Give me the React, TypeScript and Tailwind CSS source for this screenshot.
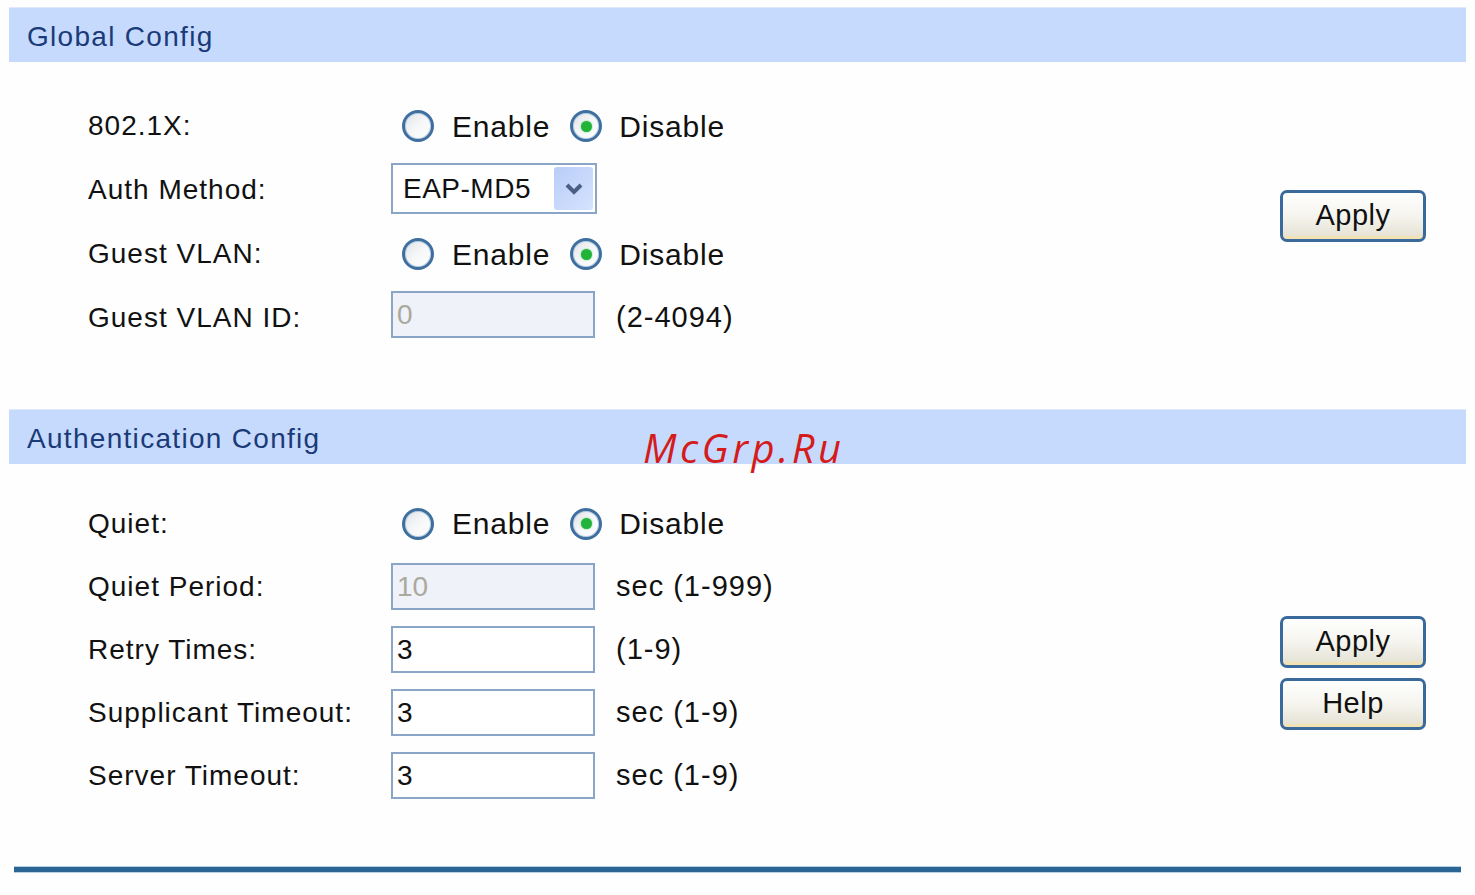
import React from "react";

const font = { fontFamily: '"Liberation Sans", Arial, sans-serif' };

function Radio({ checked }: { checked?: boolean }) {
  return (
    <span className="flex h-[32px] w-[32px] shrink-0 items-center justify-center rounded-full border-[3px] border-[#3f6f9f] bg-gradient-to-br from-[#dfe3e6] via-[#f6f7f8] to-[#ffffff] shadow-[inset_0_0_0_1px_#b9cfe4]">
      {checked && <span className="h-[11px] w-[11px] rounded-full bg-[#22b43a] shadow-[0_0_2px_#5fd36f]" />}
    </span>
  );
}

function RadioPair() {
  return (
    <div className="ml-[11px] flex items-center text-[30px] tracking-[0.8px] text-[#111]">
      <Radio />
      <span className="ml-[18px]">Enable</span>
      <span className="ml-[20px] flex"><Radio checked /></span>
      <span className="ml-[17px]">Disable</span>
    </div>
  );
}

function TextBox({ value, disabled, up }: { value: string; disabled?: boolean; up?: boolean }) {
  return (
    <div
      className={
        "flex h-[47px] w-[204px] shrink-0 items-center border-2 border-[#8aa5c6] pl-[4px] text-[28px] " +
        (disabled ? "bg-[#eff2f9] text-[#aba99c] " : "bg-white text-[#111] ") +
        (up ? "mb-[7px]" : "")
      }
    >
      {value}
    </div>
  );
}

function Range({ children }: { children: React.ReactNode }) {
  return <span className="ml-[21px] text-[29px] tracking-[1px] text-[#111]">{children}</span>;
}

function Btn({ label }: { label: string }) {
  return (
    <div className="flex h-[52px] w-[146px] items-center justify-center rounded-[7px] border-[3px] border-[#3a6a9c] bg-gradient-to-b from-[#ffffff] via-[#f5f4ee] to-[#e4e1d2] text-[29px] tracking-[0.5px] text-[#111] shadow-[inset_0_-3px_0_#f3e3b4]">
      {label}
    </div>
  );
}

function Label({ children }: { children: React.ReactNode }) {
  return <div className="w-[303px] shrink-0 text-[28px] tracking-[1px] text-[#111]">{children}</div>;
}

function Header({ title }: { title: string }) {
  return (
    <div className="flex h-[55px] items-center border-t border-[#dfe9fb] bg-[#c6dafd] pl-[18px] pt-[4px] text-[28px] tracking-[1.3px] text-[#1b3a78]">
      {title}
    </div>
  );
}

export default function App() {
  return (
    <div className="h-[895px] w-[1475px] overflow-hidden bg-[#fefefe]" style={font}>
      <div className="relative px-[9px] pt-[7px]">
        <Header title="Global Config" />
        <div className="flex pb-[59px] pt-[32px]">
          <div className="flex flex-1 flex-col pl-[79px]">
            <div className="flex h-[64px] items-center">
              <Label>802.1X:</Label>
              <RadioPair />
            </div>
            <div className="flex h-[64px] items-center">
              <Label>Auth Method:</Label>
              <div className="mb-[3px] flex h-[51px] w-[206px] items-center justify-between border-2 border-[#8aa5c6] bg-white pl-[10px] pr-[2px] text-[28px] tracking-[0.5px] text-[#111]">
                <span>EAP-MD5</span>
                <span className="flex h-[43px] w-[39px] items-center justify-center rounded-[3px] bg-gradient-to-br from-[#b8cdf8] to-[#d6e3fd]">
                  <svg width="20" height="14" viewBox="0 0 20 14">
                    <path d="M3 3 L10 10 L17 3" fill="none" stroke="#4a5e86" strokeWidth="4" />
                  </svg>
                </span>
              </div>
            </div>
            <div className="flex h-[64px] items-center">
              <Label>Guest VLAN:</Label>
              <RadioPair />
            </div>
            <div className="flex h-[64px] items-center">
              <Label>Guest VLAN ID:</Label>
              <TextBox value="0" disabled up />
              <Range>(2-4094)</Range>
            </div>
          </div>
          <div className="mr-[40px] mt-[96px]">
            <Btn label="Apply" />
          </div>
        </div>

        <div className="relative">
          <Header title="Authentication Config" />
          <div
            className="pointer-events-none absolute left-[634px] top-[9px] text-[40px] italic tracking-[3.5px] text-[#d41c1c]"
            style={{ fontFamily: '"Open Sans", "Noto Sans", sans-serif' }}
          >
            McGrp.Ru
          </div>
        </div>
        <div className="flex pb-[59px] pt-[28px]">
          <div className="flex flex-1 flex-col pl-[79px]">
            <div className="flex h-[63px] items-center">
              <Label>Quiet:</Label>
              <RadioPair />
            </div>
            <div className="flex h-[63px] items-center">
              <Label>Quiet Period:</Label>
              <TextBox value="10" disabled />
              <Range>sec (1-999)</Range>
            </div>
            <div className="flex h-[63px] items-center">
              <Label>Retry Times:</Label>
              <TextBox value="3" />
              <Range>(1-9)</Range>
            </div>
            <div className="flex h-[63px] items-center">
              <Label>Supplicant Timeout:</Label>
              <TextBox value="3" />
              <Range>sec (1-9)</Range>
            </div>
            <div className="flex h-[63px] items-center">
              <Label>Server Timeout:</Label>
              <TextBox value="3" />
              <Range>sec (1-9)</Range>
            </div>
          </div>
          <div className="mr-[40px] mt-[124px] flex flex-col gap-[10px]">
            <Btn label="Apply" />
            <Btn label="Help" />
          </div>
        </div>

        <div className="mx-[5px] h-[7px] border-y border-[#b7d0e4] bg-[#2b6594]" />
      </div>
    </div>
  );
}
